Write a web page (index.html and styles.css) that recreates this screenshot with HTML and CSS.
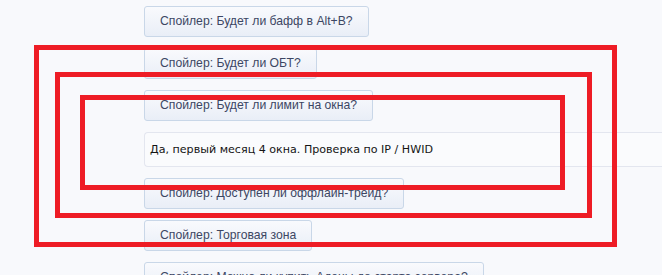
FILE: index.html
```html
<!DOCTYPE html>
<html lang="ru">
<head>
<meta charset="utf-8">
<link rel="stylesheet" href="styles.css">
</head>
<body>
<div class="page">
  <div class="list">
    <button class="spoiler">Спойлер: Будет ли бафф в Alt+B?</button>
    <button class="spoiler">Спойлер: Будет ли ОБТ?</button>
    <button class="spoiler">Спойлер: Будет ли лимит на окна?</button>
    <div class="answer">Да, первый месяц 4 окна. Проверка по IP / HWID</div>
    <button class="spoiler">Спойлер: Доступен ли оффлайн-трейд?</button>
    <button class="spoiler">Спойлер: Торговая зона</button>
    <button class="spoiler">Спойлер: Можно ли купить Адены до старта сервера?</button>
  </div>
  <div class="mark mark-outer"></div>
  <div class="mark mark-middle"></div>
  <div class="mark mark-inner"></div>
</div>
</body>
</html>
```
FILE: styles.css
```css
html, body {
  margin: 0;
  padding: 0;
  background: #f8f9fc;
}
.page {
  position: relative;
  width: 662px;
  height: 275px;
  overflow: hidden;
}
.list {
  display: flex;
  flex-direction: column;
  align-items: flex-start;
  gap: 11px;
  padding: 6px 0 0 144px;
}
.spoiler {
  height: 31px;
  padding: 0 15px;
  border: 1px solid #c9d7e8;
  border-radius: 3px;
  background: linear-gradient(#f9fafd, #e9eef7);
  color: #3c4663;
  font-family: "Liberation Sans", Arial, sans-serif;
  font-size: 12.2px;
  line-height: 29px;
  white-space: nowrap;
  cursor: pointer;
}
.answer {
  box-sizing: border-box;
  width: 560px;
  height: 35px;
  padding: 0 0 0 5px;
  border: 1px solid #e3e6ef;
  border-right: 0;
  border-radius: 4px 0 0 4px;
  background: #fafbfd;
  color: #141414;
  font-family: "DejaVu Sans", Verdana, sans-serif;
  font-size: 11.1px;
  line-height: 33px;
  white-space: nowrap;
}
.mark {
  position: absolute;
  border: 5px solid #ee1c25;
  box-sizing: border-box;
}
.mark-outer { left: 34px; top: 45px; width: 583px; height: 202px; }
.mark-middle { left: 55px; top: 72px; width: 537px; height: 146px; }
.mark-inner { left: 80px; top: 95px; width: 485px; height: 95px; }
```
